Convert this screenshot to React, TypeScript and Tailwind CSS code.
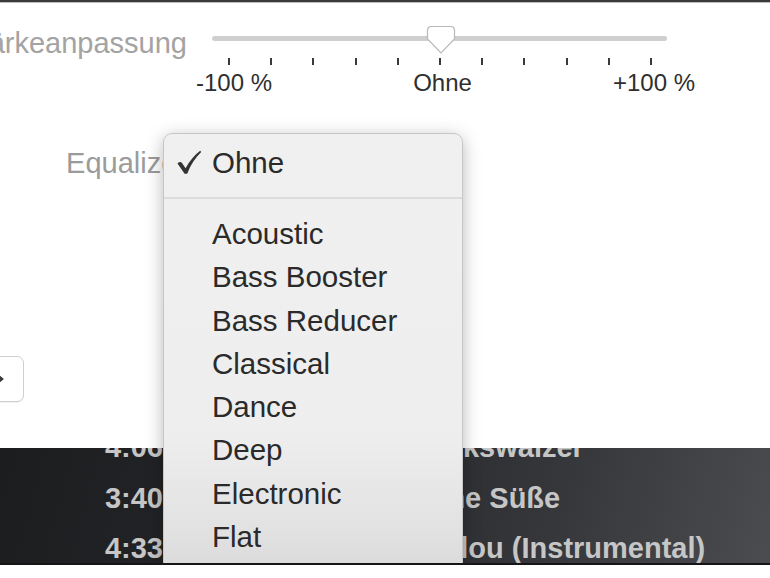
import React from 'react';

const presets = [
  'Acoustic',
  'Bass Booster',
  'Bass Reducer',
  'Classical',
  'Dance',
  'Deep',
  'Electronic',
  'Flat',
  'Hip-Hop',
  'Jazz',
];

const tracks = [
  { time: '4:06', title: 'Volkswalzer' },
  { time: '3:40', title: 'Eine Süße' },
  { time: '4:33', title: 'Malou (Instrumental)' },
];

function Knob() {
  return (
    <svg width="30" height="30" viewBox="0 0 30 30" className="absolute left-[214px] top-0">
      <path
        d="M5 1.5 H25 A3.5 3.5 0 0 1 28.5 5 V14 L15 28 L1.5 14 V5 A3.5 3.5 0 0 1 5 1.5 Z"
        fill="#ffffff"
        stroke="#b9b9b9"
        strokeWidth="1.2"
      />
    </svg>
  );
}

function PitchSlider() {
  return (
    <div className="ml-[25px] w-[455px]">
      <div className="relative h-[30px] pt-[11px]">
        <div className="h-[5px] rounded-full bg-[#cfcfcf]" />
        <Knob />
      </div>
      <div className="mt-[3px] ml-[16px] flex w-[424px] justify-between">
        {Array.from({ length: 11 }).map((_, i) => (
          <div key={i} className="h-[7px] w-[2px] bg-[#3a3a3a]" />
        ))}
      </div>
      <div className="mt-[4px] ml-[-16px] flex w-[499px] justify-between text-[24px] leading-[28px] text-[#2f2f2f]">
        <span>-100 %</span>
        <span>Ohne</span>
        <span>+100 %</span>
      </div>
    </div>
  );
}

function Check() {
  return (
    <svg width="26" height="25" viewBox="0 0 26 25" className="ml-[12px]">
      <path
        d="M1.5 13.5 C3 12 4.6 11.6 5.8 12.8 L9.6 18.2 C13.5 11 18.4 5.2 24.2 0.8 L25.2 1.9 C19.6 7.4 14.6 14.6 11.2 23.8 L8.6 23.8 Z"
        fill="#333333"
      />
    </svg>
  );
}

function PresetMenu() {
  return (
    <div className="absolute left-[163px] top-[133px] h-[520px] w-[300px] rounded-t-[9px] border border-[#c6c6c6] bg-[linear-gradient(to_bottom,#f0f0f0_0%,#eeeeee_58%,#e2e2e2_76%,#cdcdcd_100%)] pt-[7px] shadow-[0_4px_18px_rgba(0,0,0,0.28)]">
      <div className="flex h-[43.3px] items-center text-[29.5px] leading-[43.3px] text-[#2a2a2a]">
        <div className="flex w-[48px] items-center">
          <Check />
        </div>
        <span>Ohne</span>
      </div>
      <div className="mt-[13px] mb-[12.7px] h-[2px] bg-[#dcdcdc]" />
      <ul className="text-[29.5px] leading-[43.3px] text-[#2a2a2a]">
        {presets.map((p) => (
          <li key={p} className="pl-[48px]">
            {p}
          </li>
        ))}
      </ul>
    </div>
  );
}

export default function App() {
  return (
    <div className="h-[578px] w-[770px] overflow-hidden bg-white font-['Liberation_Sans',Arial,sans-serif]">
      <div className="relative h-[563px] overflow-hidden">
        <div className="h-[2px] bg-[#3a3a3a]" />
        <div className="h-px bg-[#bdbdbd]" />

        <div className="flex h-[445px] flex-col bg-white pt-[22px]">
          <div className="flex items-start">
            <div className="mt-[2px] flex w-[187px] justify-end overflow-hidden whitespace-nowrap text-[29px] leading-[33px] text-[#a3a3a3]">
              <span>Stärkeanpassung</span>
            </div>
            <PitchSlider />
          </div>

          <div className="mt-[50px] flex w-[187px] justify-end whitespace-nowrap text-[29px] leading-[33px] text-[#9b9b9b]">
            <span>Equalizer</span>
          </div>

          <div className="mt-[176px] ml-[-30px] flex h-[46px] w-[54px] items-center justify-end rounded-[7px] border border-[#cfcfcf] bg-white pr-[19px] shadow-[0_1px_1px_rgba(0,0,0,0.06)]">
            <svg width="8" height="10" viewBox="0 0 8 10">
              <path d="M1 1 L6 5 L1 9" fill="none" stroke="#3a3a3a" strokeWidth="2.4" />
            </svg>
          </div>
        </div>

        <div className="h-[115px] overflow-hidden bg-[linear-gradient(105deg,#1c1d1f_0%,#25272a_40%,#34363a_70%,#4a4c4f_100%)]">
          <div className="mt-[-26px] text-[29px] font-bold leading-[50.5px] text-[#c6c6c6]">
            {tracks.map((t) => (
              <div key={t.time} className="flex whitespace-nowrap">
                <span className="w-[163px] text-right">{t.time}</span>
                <span className="ml-[257px]">{t.title}</span>
              </div>
            ))}
          </div>
        </div>

        <PresetMenu />
      </div>
      <div className="h-[2px] bg-[#151515]" />
    </div>
  );
}
